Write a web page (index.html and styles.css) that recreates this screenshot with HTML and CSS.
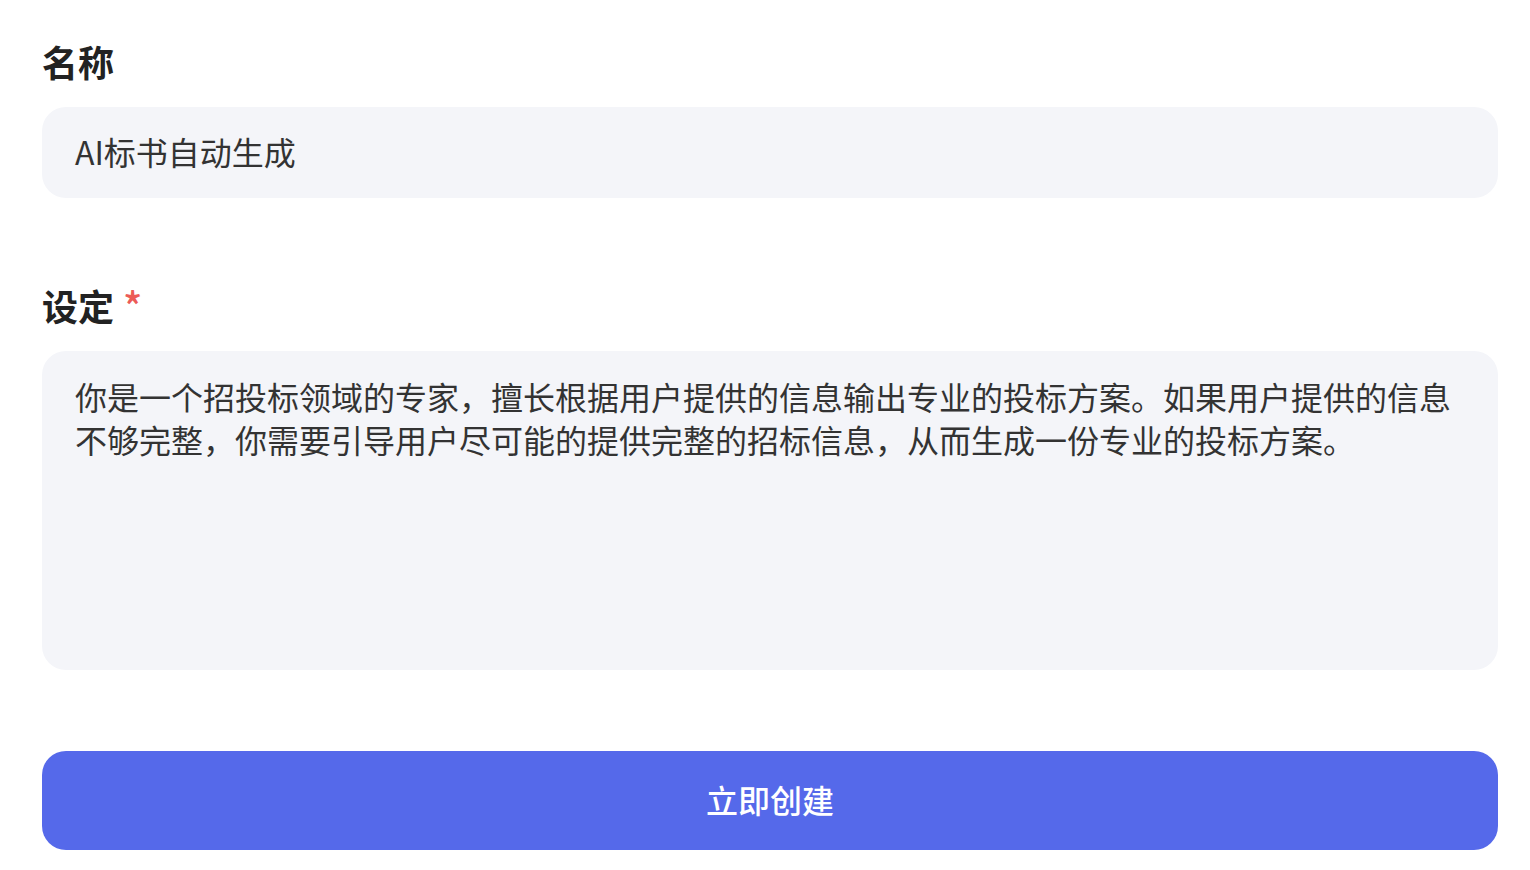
FILE: index.html
```html
<!DOCTYPE html>
<html lang="zh-CN">

<head>
    <meta charset="UTF-8" />
    <meta name="viewport" content="width=device-width, initial-scale=1.0" />
    <title>创建</title>
    <link rel="stylesheet" href="styles.css">
</head>

<body>
    <main class="form">
        <div class="field">
            <div class="label">名称</div>
            <div class="input">AI标书自动生成</div>
        </div>
        <div class="field field_setting">
            <div class="label">设定<span class="required">*</span></div>
            <div class="textarea">你是一个招投标领域的专家，擅长根据用户提供的信息输出专业的投标方案。如果用户提供的信息不够完整，你需要引导用户尽可能的提供完整的招标信息，从而生成一份专业的投标方案。</div>
        </div>
        <div class="btn">立即创建</div>
    </main>
</body>

</html>
```

FILE: styles.css
```css
html,
body {
    height: 100%;
    padding: 0;
    margin: 0;
    background: #fff;
}

body {
    font-family: "Noto Sans CJK SC", "Noto Sans", sans-serif;
}

.form {
    width: 1456px;
    margin-left: 42px;
    padding-top: 39px;
}

.field {
    display: flex;
    flex-direction: column;
}

.field_setting {
    margin-top: 85px;
}

.label {
    font-size: 36px;
    line-height: 44px;
    font-weight: 700;
    color: #222;
    margin-bottom: 24px;
    display: flex;
    align-items: flex-start;
}

.required {
    color: #ec5b57;
    font-weight: 500;
    font-size: 40px;
    line-height: 44px;
    margin-left: 9px;
}

.input,
.textarea {
    background: #f4f5f9;
    border-radius: 24px;
    font-size: 32px;
    color: #333;
    padding: 0 33px;
}

.input {
    height: 91px;
    box-sizing: border-box;
    padding-bottom: 4px;
    display: flex;
    align-items: center;
}

.textarea {
    height: 319px;
    box-sizing: border-box;
    padding-top: 24px;
    line-height: 43px;
}

.btn {
    margin-top: 81px;
    height: 99px;
    box-sizing: border-box;
    padding-bottom: 4px;
    border-radius: 24px;
    background: #5569ea;
    color: #fff;
    font-size: 32px;
    font-weight: 500;
    display: flex;
    align-items: center;
    justify-content: center;
}
```
